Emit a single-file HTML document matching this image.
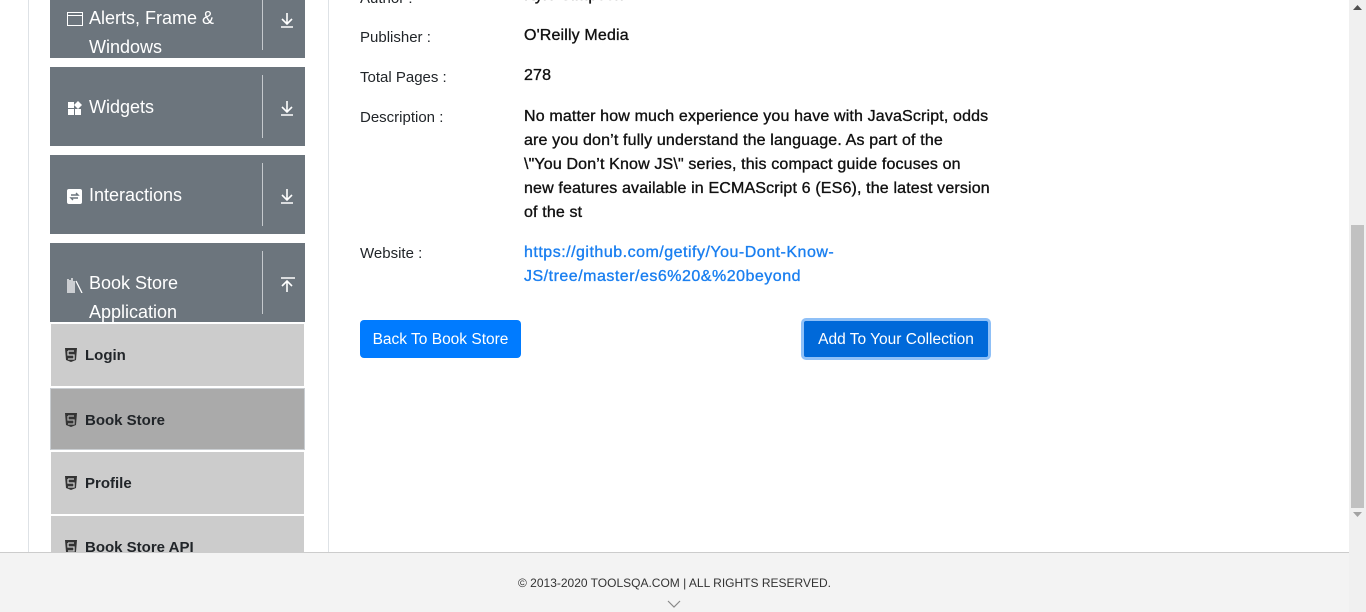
<!DOCTYPE html>
<html><head><meta charset="utf-8"><style>
*{margin:0;padding:0;box-sizing:border-box}
body{width:1366px;height:612px;overflow:hidden;background:#fff;font-family:"Liberation Sans",Arial,sans-serif;position:relative;color:#212529}
.a{position:absolute;white-space:nowrap}
.vl{position:absolute;top:0;width:1px;height:552px;background:#dee2e6}
.grp{position:absolute;left:50px;width:255px;background:#6c757d;color:#fff;font-size:18px;overflow:hidden}
.grp .dv{position:absolute;left:212px;width:1px;background:#c5c9cd}
.grp .ar{position:absolute;left:229px;width:16px;height:16px}
.grp .ic{position:absolute;left:17px}
.grp .t{position:absolute;left:39px;line-height:29px;top:1px}
.sub{position:absolute;left:51px;width:253px;height:62px;background:#ccc;font-size:15px;font-weight:bold;color:#212529}
.sub .t{position:absolute;left:34px;top:23px}
.sub svg{position:absolute;left:14px;top:24px}
.lbl{position:absolute;left:360px;font-size:15px;color:#212529}
.val{position:absolute;left:524px;font-size:16px;letter-spacing:0.15px;color:#111;-webkit-text-stroke:0.35px #111;white-space:nowrap}
.lnk{color:#1a7ff0;-webkit-text-stroke:0.35px #1a7ff0;letter-spacing:0.5px}
.btn{position:absolute;color:#fff;font-size:15.5px;border-radius:4px;text-align:center}
</style></head><body>
<div class="vl" style="left:28px"></div>
<div class="vl" style="left:328px"></div>

<div class="grp" style="top:0;height:58px">
 <svg class="ic" style="top:12px" width="16" height="14" viewBox="0 0 16 14"><rect x="0.5" y="0.5" width="15" height="13" fill="none" stroke="#fff"/><line x1="0" y1="3.5" x2="16" y2="3.5" stroke="#fff"/></svg>
 <div class="t" style="top:4px">Alerts, Frame &amp;<br>Windows</div>
 <div class="dv" style="top:0;height:50px"></div>
 <svg class="ar" style="top:12px" viewBox="0 0 16 16"><path d="M8 1v10M3 7l5 5 5-5M2 15h12" stroke="#fff" stroke-width="1.6" fill="none"/></svg>
</div>
<div class="grp" style="top:67px;height:79px">
 <svg class="ic" style="top:33px" width="16" height="16" viewBox="0 0 16 16"><rect x="1" y="2" width="6" height="6" fill="#fff"/><rect x="1" y="9" width="6" height="6" fill="#fff"/><rect x="8" y="9" width="6" height="6" fill="#fff"/><path d="M11 1l4 4-4 4-4-4z" fill="#fff"/></svg>
 <div class="t" style="top:26px">Widgets</div>
 <div class="dv" style="top:8px;height:63px"></div>
 <svg class="ar" style="top:33px" viewBox="0 0 16 16"><path d="M8 1v10M3 7l5 5 5-5M2 15h12" stroke="#fff" stroke-width="1.6" fill="none"/></svg>
</div>
<div class="grp" style="top:155px;height:79px">
 <svg class="ic" style="top:34px" width="15" height="15" viewBox="0 0 15 15"><rect width="15" height="15" rx="2" fill="#fff"/><path d="M4 6h7l-2-2M11 9H4l2 2" stroke="#6c757d" stroke-width="1.4" fill="none"/></svg>
 <div class="t" style="top:26px">Interactions</div>
 <div class="dv" style="top:8px;height:63px"></div>
 <svg class="ar" style="top:33px" viewBox="0 0 16 16"><path d="M8 1v10M3 7l5 5 5-5M2 15h12" stroke="#fff" stroke-width="1.6" fill="none"/></svg>
</div>
<div class="grp" style="top:243px;height:79px">
 <svg class="ic" style="top:34px" width="18" height="16" viewBox="0 0 18 16"><path d="M1 2v14M3 3v13M5 1v15M7 4v12M9 4l6 12" stroke="#fff" stroke-width="1.3" fill="none"/></svg>
 <div class="t" style="top:26px">Book Store<br>Application</div>
 <div class="dv" style="top:8px;height:63px"></div>
 <svg class="ar" style="top:34px" viewBox="0 0 16 16"><path d="M8 15V5M3 9l5-5 5 5M2 1h14" stroke="#fff" stroke-width="1.6" fill="none"/></svg>
</div>

<div class="sub" style="top:324px"><svg width="12" height="14" viewBox="0 0 12 14"><path d="M0 0h12l-1 12-5 2-5-2z" fill="#333"/><path d="M3 3h6M3 3v4h6v4H3" stroke="#ccc" stroke-width="1.3" fill="none"/></svg><span class="t">Login</span></div>
<div class="sub" style="top:388px;background:#aaa;border:1px solid #c9cdd1;left:50px;width:255px"><svg width="12" height="14" viewBox="0 0 12 14"><path d="M0 0h12l-1 12-5 2-5-2z" fill="#333"/><path d="M3 3h6M3 3v4h6v4H3" stroke="#aaa" stroke-width="1.3" fill="none"/></svg><span class="t">Book Store</span></div>
<div class="sub" style="top:452px"><svg width="12" height="14" viewBox="0 0 12 14"><path d="M0 0h12l-1 12-5 2-5-2z" fill="#333"/><path d="M3 3h6M3 3v4h6v4H3" stroke="#ccc" stroke-width="1.3" fill="none"/></svg><span class="t">Profile</span></div>
<div class="sub" style="top:516px;height:40px"><svg width="12" height="14" viewBox="0 0 12 14"><path d="M0 0h12l-1 12-5 2-5-2z" fill="#333"/><path d="M3 3h6M3 3v4h6v4H3" stroke="#ccc" stroke-width="1.3" fill="none"/></svg><span class="t">Book Store API</span></div>

<div class="lbl" style="top:-10px">Author :</div><div class="val" style="top:-13px">Kyle Simpson</div>
<div class="lbl" style="top:29px">Publisher :</div><div class="val" style="top:27px">O'Reilly Media</div>
<div class="lbl" style="top:69px">Total Pages :</div><div class="val" style="top:67px">278</div>
<div class="lbl" style="top:109px">Description :</div>
<div class="val" style="top:105px;line-height:24px">No matter how much experience you have with JavaScript, odds<br>are you don’t fully understand the language. As part of the<br>\"You Don’t Know JS\" series, this compact guide focuses on<br>new features available in ECMAScript 6 (ES6), the latest version<br>of the st</div>
<div class="lbl" style="top:245px">Website :</div>
<div class="val lnk" style="top:241px;line-height:24px">https://github.com/getify/You-Dont-Know-<br>JS/tree/master/es6%20&amp;%20beyond</div>

<div class="btn" style="left:360px;top:320px;width:161px;height:38px;line-height:40px;background:#007bff">Back To Book Store</div>
<div class="btn" style="left:801px;top:318px;width:190px;height:42px;line-height:38px;background:#0069d9;border:3px solid #8fc0f7;border-radius:5px">Add To Your Collection</div>

<div class="a" style="left:0;top:552px;width:1349px;height:60px;background:#f3f3f3;border-top:1px solid #ccc"></div>
<div class="a" style="left:0;top:576px;width:1349px;text-align:center;font-size:12px;color:#333">© 2013-2020 TOOLSQA.COM | ALL RIGHTS RESERVED.</div>
<svg class="a" style="left:667px;top:600px" width="14" height="8" viewBox="0 0 14 8"><path d="M1 1l6 6 6-6" stroke="#888" stroke-width="1.2" fill="none"/></svg>

<div class="a" style="left:1349px;top:0;width:17px;height:612px;background:#f0f0f0"></div>
<div class="a" style="left:1351px;top:225px;width:13px;height:283px;background:#c1c1c1"></div>
<svg class="a" style="left:1353px;top:5px" width="9" height="6" viewBox="0 0 9 6"><path d="M0 5L4.5 0 9 5z" fill="#505050"/></svg>
<svg class="a" style="left:1353px;top:512px" width="9" height="6" viewBox="0 0 9 6"><path d="M0 0h9L4.5 5z" fill="#a3a3a3"/></svg>
</body></html>
